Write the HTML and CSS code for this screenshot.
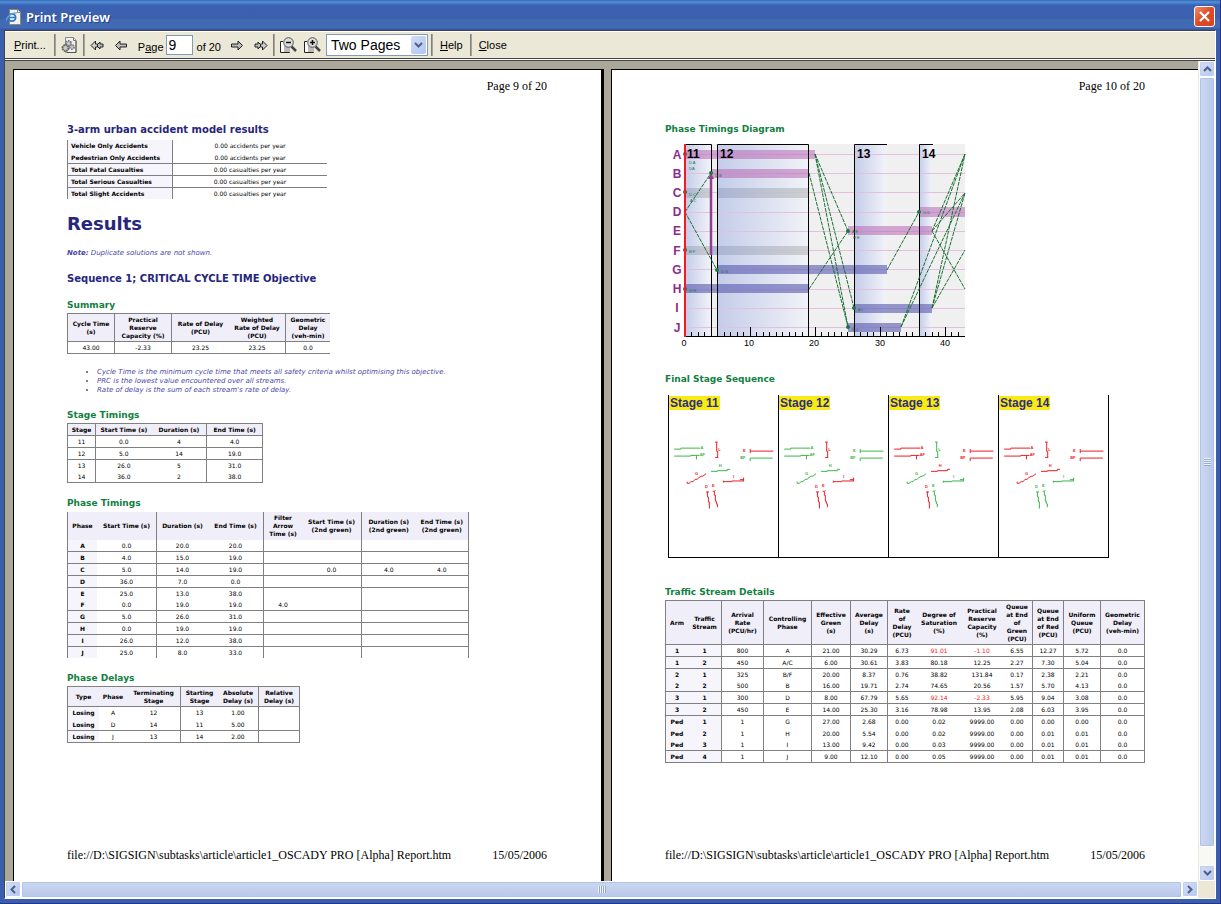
FILE: index.html
```html
<!DOCTYPE html>
<html lang="en">
<head>
<meta charset="utf-8">
<title>Print Preview</title>
<link rel="stylesheet" href="styles.css">
</head>
<body>
<div class="window">
  <header class="titlebar">
    <svg class="app-icon" viewBox="0 0 16 16" width="16" height="16" aria-hidden="true">
      <path d="M3.500.5h8l3 3v12h-11z" fill="#f4f2e6" stroke="#8a8878"/>
      <path d="M11.500.5v3h3" fill="#fff" stroke="#8a8878"/>
      <circle cx="6" cy="8.500" r="3.600" fill="none" stroke="#2f78c8" stroke-width="1.800"/>
      <path d="M3 8.500h6.500" stroke="#2f78c8" stroke-width="1.500"/>
      <path d="M0 12C1 7 6 3.500 11 4" fill="none" stroke="#5fa0dc" stroke-width="1.200"/>
    </svg>
    <h1 class="window-title">Print Preview</h1>
    <button class="close-btn" type="button" aria-label="Close window">
      <svg viewBox="0 0 19 19" width="19" height="19"><path d="M5 5l9 9M14 5l-9 9" stroke="#fff" stroke-width="2.200"/></svg>
    </button>
  </header>

  <div class="client">
    <div class="toolbar" role="toolbar">
      <button class="tool text print" type="button"><u>P</u>rint...</button>
      <span class="sep"></span>
      <button class="tool setup" type="button" aria-label="Page setup">
        <svg viewBox="0 0 16 16" width="16" height="16"><path d="M4.500.5h8l2.500 2.500v12.500H4.500z" fill="#f0f0f0" stroke="#888"/><path d="M12.500.5v3H15" fill="#fff" stroke="#777"/><path d="M6 15.500h9V4" fill="none" stroke="#555"/><circle cx="7.500" cy="6.500" r="2.500" fill="#ccc" stroke="#777" stroke-width="2" stroke-dasharray="1.500 .7"/><circle cx="11" cy="10" r="2" fill="#ccc" stroke="#888" stroke-width="2" stroke-dasharray="1.500 .7"/><circle cx="4.500" cy="11" r="3" fill="#ccc" stroke="#666" stroke-width="2" stroke-dasharray="1.700 .6"/></svg>
      </button>
      <span class="sep"></span>
      <button class="tool nav" type="button" aria-label="First page">
        <svg viewBox="0 0 14 11" width="14" height="11"><path d="M6.500 5.500L10 2v2h3v3h-3v2z" fill="#bbb" stroke="#222"/><path d="M1 5.500L5.500 1v3h2v3h-2v3z" fill="#ccc" stroke="#222"/></svg>
      </button>
      <button class="tool nav" type="button" aria-label="Previous page">
        <svg viewBox="0 0 14 11" width="14" height="11"><path d="M1.500 5.500L6 1v3h6.500v3H6v3z" fill="#bbb" stroke="#222"/></svg>
      </button>
      <label class="page-label" for="page-no">P<u>a</u>ge</label>
      <input class="page-no" id="page-no" type="text" value="9">
      <span class="page-total">of 20</span>
      <button class="tool nav" type="button" aria-label="Next page">
        <svg viewBox="0 0 14 11" width="14" height="11"><path d="M12.500 5.500L8 1v3H1.500v3H8v3z" fill="#bbb" stroke="#222"/></svg>
      </button>
      <button class="tool nav" type="button" aria-label="Last page">
        <svg viewBox="0 0 14 11" width="14" height="11"><path d="M7.500 5.500L4 2v2H1v3h3v2z" fill="#bbb" stroke="#222"/><path d="M13 5.500L8.500 1v3h-2v3h2v3z" fill="#ccc" stroke="#222"/></svg>
      </button>
      <span class="sep"></span>
      <button class="tool zoom" type="button" aria-label="Zoom out">
        <svg viewBox="0 0 17 17" width="17" height="17"><path d="M3 4.500H.5v11h9V12" fill="#fff" stroke="#222"/><path d="M4 6h6v9H4z" fill="#bbb"/><path d="M11.500 9.500l4.500 4.500" stroke="#444" stroke-width="2.500"/><circle cx="8.500" cy="5.500" r="4.800" fill="#ddd" stroke="#555"/><path d="M6 5.500h5" stroke="#111" stroke-width="1.500"/></svg>
      </button>
      <button class="tool zoom" type="button" aria-label="Zoom in">
        <svg viewBox="0 0 17 17" width="17" height="17"><path d="M3 4.500H.5v11h9V12" fill="#fff" stroke="#222"/><path d="M4 6h6v9H4z" fill="#bbb"/><path d="M11.500 9.500l4.500 4.500" stroke="#444" stroke-width="2.500"/><circle cx="8.500" cy="5.500" r="4.800" fill="#ddd" stroke="#555"/><path d="M6 5.500h5M8.500 3v5" stroke="#111" stroke-width="1.500"/></svg>
      </button>
      <span class="combo">
        <select class="combo-select" aria-label="Zoom"><option>Two Pages</option></select>
        <span class="combo-arrow"><svg viewBox="0 0 9 6" width="9" height="6"><path d="M1 1l3.500 3.500L8 1" fill="none" stroke="#4d6185" stroke-width="2"/></svg></span>
      </span>
      <span class="sep"></span>
      <button class="tool text" type="button"><u>H</u>elp</button>
      <span class="sep"></span>
      <button class="tool text" type="button"><u>C</u>lose</button>
    </div>

    <div class="viewer">
      <main class="preview">
        <article class="sheet">
          <div class="sheet-head">Page 9 of 20</div>

          <h3 class="section">3-arm urban accident model results</h3>
          <table class="grid accidents">
            <colgroup><col><col></colgroup>
            <tbody>
              <tr class="open"><th>Vehicle Only Accidents</th><td>0.00 accidents per year</td></tr>
              <tr><th>Pedestrian Only Accidents</th><td>0.00 accidents per year</td></tr>
              <tr><th>Total Fatal Casualties</th><td>0.00 casualties per year</td></tr>
              <tr><th>Total Serious Casualties</th><td>0.00 casualties per year</td></tr>
              <tr class="open short"><th>Total Slight Accidents</th><td>0.00 casualties per year</td></tr>
            </tbody>
          </table>

          <h2 class="results">Results</h2>
          <p class="note"><b>Note:</b> Duplicate solutions are not shown.</p>
          <h3 class="section sequence">Sequence 1; CRITICAL CYCLE TIME Objective</h3>

          <h4 class="caption lead">Summary</h4>
          <table class="grid ruled summary">
            <colgroup><col><col><col><col><col></colgroup>
            <thead><tr><th>Cycle Time<br>(s)</th><th>Practical<br>Reserve<br>Capacity (%)</th><th>Rate of Delay<br>(PCU)</th><th>Weighted<br>Rate of Delay<br>(PCU)</th><th>Geometric<br>Delay<br>(veh-min)</th></tr></thead>
            <tbody><tr><td>43.00</td><td>-2.33</td><td>23.25</td><td>23.25</td><td>0.0</td></tr></tbody>
          </table>
          <ul class="remarks">
            <li>Cycle Time is the minimum cycle time that meets all safety criteria whilst optimising this objective.</li>
            <li>PRC is the lowest value encountered over all streams.</li>
            <li>Rate of delay is the sum of each stream's rate of delay.</li>
          </ul>

          <h4 class="caption">Stage Timings</h4>
          <table class="grid ruled stage-times">
            <colgroup><col><col><col><col></colgroup>
            <thead><tr><th>Stage</th><th>Start Time (s)</th><th>Duration (s)</th><th>End Time (s)</th></tr></thead>
            <tbody>
              <tr><td>11</td><td>0.0</td><td>4</td><td>4.0</td></tr>
              <tr><td>12</td><td>5.0</td><td>14</td><td>19.0</td></tr>
              <tr class="open"><td>13</td><td>26.0</td><td>5</td><td>31.0</td></tr>
              <tr class="short"><td>14</td><td>36.0</td><td>2</td><td>38.0</td></tr>
            </tbody>
          </table>

          <h4 class="caption">Phase Timings</h4>
          <table class="grid phase-times">
            <colgroup><col><col><col><col><col><col><col><col></colgroup>
            <thead><tr class="open"><th>Phase</th><th>Start Time (s)</th><th>Duration (s)</th><th>End Time (s)</th><th>Filter<br>Arrow<br>Time (s)</th><th>Start Time (s)<br>(2nd green)</th><th>Duration (s)<br>(2nd green)</th><th>End Time (s)<br>(2nd green)</th></tr></thead>
            <tbody>
              <tr><th>A</th><td>0.0</td><td>20.0</td><td>20.0</td><td></td><td></td><td></td><td></td></tr>
              <tr><th>B</th><td>4.0</td><td>15.0</td><td>19.0</td><td></td><td></td><td></td><td></td></tr>
              <tr><th>C</th><td>5.0</td><td>14.0</td><td>19.0</td><td></td><td>0.0</td><td>4.0</td><td>4.0</td></tr>
              <tr><th>D</th><td>36.0</td><td>7.0</td><td>0.0</td><td></td><td></td><td></td><td></td></tr>
              <tr class="open"><th>E</th><td>25.0</td><td>13.0</td><td>38.0</td><td></td><td></td><td></td><td></td></tr>
              <tr class="short"><th>F</th><td>0.0</td><td>19.0</td><td>19.0</td><td>4.0</td><td></td><td></td><td></td></tr>
              <tr><th>G</th><td>5.0</td><td>26.0</td><td>31.0</td><td></td><td></td><td></td><td></td></tr>
              <tr><th>H</th><td>0.0</td><td>19.0</td><td>19.0</td><td></td><td></td><td></td><td></td></tr>
              <tr><th>I</th><td>26.0</td><td>12.0</td><td>38.0</td><td></td><td></td><td></td><td></td></tr>
              <tr class="open short"><th>J</th><td>25.0</td><td>8.0</td><td>33.0</td><td></td><td></td><td></td><td></td></tr>
            </tbody>
          </table>

          <h4 class="caption">Phase Delays</h4>
          <table class="grid ruled delays">
            <colgroup><col><col><col><col><col><col></colgroup>
            <thead><tr><th>Type</th><th>Phase</th><th>Terminating<br>Stage</th><th>Starting<br>Stage</th><th>Absolute<br>Delay (s)</th><th>Relative<br>Delay (s)</th></tr></thead>
            <tbody>
              <tr class="open"><th>Losing</th><td>A</td><td>12</td><td>13</td><td>1.00</td><td></td></tr>
              <tr><th>Losing</th><td>D</td><td>14</td><td>11</td><td>5.00</td><td></td></tr>
              <tr><th>Losing</th><td>J</td><td>13</td><td>14</td><td>2.00</td><td></td></tr>
            </tbody>
          </table>

          <footer class="sheet-foot"><span>file://D:\SIGSIGN\subtasks\article\article1_OSCADY PRO [Alpha] Report.htm</span><span>15/05/2006</span></footer>
        </article>

        <article class="sheet">
          <div class="sheet-head">Page 10 of 20</div>

          <h4 class="caption first">Phase Timings Diagram</h4>
          <svg class="diagram" viewBox="0 -3 305 213" width="305" height="213" role="img" aria-label="Phase timings diagram">
            <defs>
              <linearGradient id="fade"><stop offset="0" stop-color="#c3cce9"/><stop offset="1" stop-color="#f2f3f8"/></linearGradient>
              <linearGradient id="grey"><stop offset="0" stop-color="#a4b0d0"/><stop offset="1" stop-color="#c8cac8"/></linearGradient>
            </defs>
            <path fill="#f0f0f0" d="M20 4h280v192H20z"/>
            <g fill="url(#fade)"><rect x="20" y="4" width="26" height="192"/><rect x="52" y="4" width="92" height="192"/><rect x="189" y="4" width="32" height="192"/><rect x="254" y="4" width="13" height="192"/></g>
            <path d="M20 14.500h280M20 33.500h280M20 52.500h280M20 72.500h280M20 91.500h280M20 110.500h280M20 129.500h280M20 149.500h280M20 168.500h280M20 187.500h280" stroke="#e3bfe0"/>
            <g fill="#b868b4" fill-opacity=".55"><path d="M20 10h130v9H20z"/><path d="M46 29h98v9H46z"/><path d="M254 67h46v10h-46z"/><path d="M183 86h84v9h-84z"/></g>
            <g fill="url(#grey)" fill-opacity=".85"><rect x="20" y="48" width="26" height="10"/><rect x="52" y="48" width="92" height="10"/><rect x="20" y="106" width="26" height="9"/><rect x="46" y="106" width="98" height="9"/></g>
            <g fill="#5a5cb0" fill-opacity=".62"><path d="M52 125h170v9H52z"/><path d="M20 144h124v9H20z"/><path d="M189 164h78v9h-78z"/><path d="M183 183h53v9h-53z"/></g>
            <path d="M46.500 196V4.500H20M52.500 196V4.500h91V196M189.500 196V4.500H222M254.500 196V4.500H268" fill="none" stroke="#000"/>
            <path d="M46 115V38" stroke="#933e93" stroke-width="2.500"/><path d="M43 39l3-6 3 6z" fill="#933e93"/>
            <path d="M20 72l26-39M20 72l32 58M150 14l33 77M150 14l39 154M150 14l33 173M144 33l39 154M144 149l39-58M222 130l32-58M236 187L300 14M236 187L300 53M267 91L300 14M267 91L300 53M267 168L300 14M267 168L300 53M267 91l33 58M267 168l33-58" fill="none" stroke="#1b7032" stroke-dasharray="4 1"/>
            <g fill="#177a3b"><circle cx="46" cy="33" r="2"/><circle cx="52" cy="130" r="2"/><circle cx="183" cy="91" r="2"/><circle cx="189" cy="168" r="2"/><circle cx="183" cy="187" r="2"/><circle cx="254" cy="72" r="2"/><circle cx="20" cy="14" r="2"/><circle cx="20" cy="52" r="2"/><circle cx="20" cy="110" r="2"/><circle cx="20" cy="149" r="2"/></g>
            <g class="tiny-tag"><text x="24" y="24">D A</text><text x="24" y="30">DA</text><text x="50" y="37">D B</text><text x="24" y="56">D C</text><text x="25" y="62">A C</text><text x="24" y="113">B F</text><text x="56" y="133">D G</text><text x="24" y="152">G H</text><text x="187" y="93">A E</text><text x="188" y="99">H E</text><text x="193" y="171">A I</text><text x="187" y="191">B J</text><text x="258" y="74">G D</text></g>
            <path d="M20 196.500h280" stroke="#000"/>
            <path d="M26.500 192v4M33.500 192v4M39.500 192v4M46.500 192v4M59.500 192v4M65.500 192v4M72.500 192v4M78.500 192v4M85.500 187v9M91.500 192v4M98.500 192v4M104.500 192v4M111.500 192v4M117.500 192v4M124.500 192v4M130.500 192v4M137.500 192v4M150.500 187v9M156.500 192v4M163.500 192v4M169.500 192v4M176.500 192v4M182.500 192v4M195.500 192v4M202.500 192v4M208.500 192v4M215.500 187v9M221.500 192v4M228.500 192v4M234.500 192v4M241.500 192v4M247.500 192v4M260.500 192v4M267.500 192v4M273.500 192v4M280.500 187v9M286.500 192v4M293.500 192v4" stroke="#000"/>
            <path d="M20 4v193" stroke="#ee1c24" stroke-width="2"/>
            <g class="phase-name"><text x="12" y="19">A</text><text x="12" y="38">B</text><text x="12" y="57">C</text><text x="12" y="76">D</text><text x="12" y="95">E</text><text x="12" y="115">F</text><text x="12" y="134">G</text><text x="12" y="153">H</text><text x="12" y="172">I</text><text x="12" y="192">J</text></g>
            <g class="stage-no"><text x="22" y="18">11</text><text x="55" y="18">12</text><text x="192" y="18">13</text><text x="257" y="18">14</text></g>
            <g class="tick-no"><text x="19" y="206">0</text><text x="84" y="206">10</text><text x="149" y="206">20</text><text x="215" y="206">30</text><text x="280" y="206">40</text></g>
          </svg>

          <h4 class="caption seq">Final Stage Sequence</h4>
          <svg class="defs" width="0" height="0" aria-hidden="true">
            <defs>
              <g id="mv-a"><path d="M18 163h20v-3h58"/><text x="97" y="162">A</text></g>
              <g id="mv-af"><path d="M18 184h50v-2h26M85 182v12"/><text x="95" y="184">AF</text></g>
              <g id="mv-l"><path d="M141 142h8M146 142v28h3v17M141 188h10"/><text x="151" y="169">L</text></g>
              <g id="mv-e"><path d="M247 163v12M247 169h70"/><text x="225" y="171">E</text></g>
              <g id="mv-bf"><path d="M247 199v-9h68"/><text x="217" y="192">BF</text></g>
              <g id="mv-g"><path d="M57 261v5h6l6-5h6l6-7h6l5-5 7-4 6-1 9-7"/><text x="81" y="242">G</text></g>
              <g id="mv-h"><path d="M129 230h19v-2h30v-4h8"/><text x="152" y="218">H</text></g>
              <g id="mv-i"><path d="M166 258v6M166 261h25v-2h36M216 255h12M227 249v11"/><text x="195" y="249">I</text></g>
              <g id="mv-d"><path d="M114 292h9M118 292v15h3v15h3v20"/><text x="111" y="281">D</text></g>
              <g id="mv-b"><path d="M134 290h5l3-3M139 290v12h3v18h3v8h3v10"/><text x="132" y="277">E</text></g>
            </defs>
          </svg>
          <div class="stages">
            <figure class="stage"><figcaption>Stage 11</figcaption>
              <svg viewBox="0 0 330 488" width="110" height="162"><g class="go"><use href="#mv-a"/><use href="#mv-af"/><use href="#mv-bf"/><use href="#mv-h"/></g><g class="halt"><use href="#mv-l"/><use href="#mv-e"/><use href="#mv-g"/><use href="#mv-i"/><use href="#mv-d"/><use href="#mv-b"/></g></svg></figure>
            <figure class="stage"><figcaption>Stage 12</figcaption>
              <svg viewBox="0 0 330 488" width="110" height="162"><g class="go"><use href="#mv-a"/><use href="#mv-af"/><use href="#mv-e"/><use href="#mv-bf"/><use href="#mv-h"/><use href="#mv-g"/></g><g class="halt"><use href="#mv-l"/><use href="#mv-i"/><use href="#mv-d"/><use href="#mv-b"/></g></svg></figure>
            <figure class="stage"><figcaption>Stage 13</figcaption>
              <svg viewBox="0 0 330 488" width="110" height="162"><g class="go"><use href="#mv-l"/><use href="#mv-g"/><use href="#mv-i"/><use href="#mv-b"/></g><g class="halt"><use href="#mv-a"/><use href="#mv-af"/><use href="#mv-e"/><use href="#mv-bf"/><use href="#mv-h"/><use href="#mv-d"/></g></svg></figure>
            <figure class="stage"><figcaption>Stage 14</figcaption>
              <svg viewBox="0 0 330 488" width="110" height="162"><g class="go"><use href="#mv-i"/><use href="#mv-d"/><use href="#mv-b"/></g><g class="halt"><use href="#mv-a"/><use href="#mv-af"/><use href="#mv-l"/><use href="#mv-e"/><use href="#mv-bf"/><use href="#mv-h"/><use href="#mv-g"/></g></svg></figure>
          </div>

          <h4 class="caption streams-title">Traffic Stream Details</h4>
          <table class="grid ruled streams">
            <colgroup><col><col><col><col><col><col><col><col><col><col><col><col><col></colgroup>
            <thead><tr><th>Arm</th><th>Traffic<br>Stream</th><th>Arrival<br>Rate<br>(PCU/hr)</th><th>Controlling<br>Phase</th><th>Effective<br>Green<br>(s)</th><th>Average<br>Delay<br>(s)</th><th>Rate<br>of<br>Delay<br>(PCU)</th><th>Degree of<br>Saturation<br>(%)</th><th>Practical<br>Reserve<br>Capacity<br>(%)</th><th>Queue<br>at End<br>of<br>Green<br>(PCU)</th><th>Queue<br>at End<br>of Red<br>(PCU)</th><th>Uniform<br>Queue<br>(PCU)</th><th>Geometric<br>Delay<br>(veh-min)</th></tr></thead>
            <tbody>
              <tr><th>1</th><th>1</th><td>800</td><td>A</td><td>21.00</td><td>30.29</td><td>6.73</td><td class="over">91.01</td><td class="over">-1.10</td><td>6.55</td><td>12.27</td><td>5.72</td><td>0.0</td></tr>
              <tr><th>1</th><th>2</th><td>450</td><td>A/C</td><td>6.00</td><td>30.61</td><td>3.83</td><td>80.18</td><td>12.25</td><td>2.27</td><td>7.30</td><td>5.04</td><td>0.0</td></tr>
              <tr class="open"><th>2</th><th>1</th><td>325</td><td>B/F</td><td>20.00</td><td>8.37</td><td>0.76</td><td>38.82</td><td>131.84</td><td>0.17</td><td>2.38</td><td>2.21</td><td>0.0</td></tr>
              <tr class="short"><th>2</th><th>2</th><td>500</td><td>B</td><td>16.00</td><td>19.71</td><td>2.74</td><td>74.65</td><td>20.56</td><td>1.57</td><td>5.70</td><td>4.13</td><td>0.0</td></tr>
              <tr><th>3</th><th>1</th><td>300</td><td>D</td><td>8.00</td><td>67.79</td><td>5.65</td><td class="over">92.14</td><td class="over">-2.33</td><td>5.95</td><td>9.04</td><td>3.08</td><td>0.0</td></tr>
              <tr><th>3</th><th>2</th><td>450</td><td>E</td><td>14.00</td><td>25.30</td><td>3.16</td><td>78.98</td><td>13.95</td><td>2.08</td><td>6.03</td><td>3.95</td><td>0.0</td></tr>
              <tr class="open"><th>Ped</th><th>1</th><td>1</td><td>G</td><td>27.00</td><td>2.68</td><td>0.00</td><td>0.02</td><td>9999.00</td><td>0.00</td><td>0.00</td><td>0.00</td><td>0.0</td></tr>
              <tr class="open"><th>Ped</th><th>2</th><td>1</td><td>H</td><td>20.00</td><td>5.54</td><td>0.00</td><td>0.02</td><td>9999.00</td><td>0.00</td><td>0.01</td><td>0.01</td><td>0.0</td></tr>
              <tr class="short"><th>Ped</th><th>3</th><td>1</td><td>I</td><td>13.00</td><td>9.42</td><td>0.00</td><td>0.03</td><td>9999.00</td><td>0.00</td><td>0.01</td><td>0.01</td><td>0.0</td></tr>
              <tr><th>Ped</th><th>4</th><td>1</td><td>J</td><td>9.00</td><td>12.10</td><td>0.00</td><td>0.05</td><td>9999.00</td><td>0.00</td><td>0.01</td><td>0.01</td><td>0.0</td></tr>
            </tbody>
          </table>

          <footer class="sheet-foot"><span>file://D:\SIGSIGN\subtasks\article\article1_OSCADY PRO [Alpha] Report.htm</span><span>15/05/2006</span></footer>
        </article>
      </main>

      <div class="scroll vertical">
        <button class="scroll-btn" type="button" aria-label="Scroll up"><svg viewBox="0 0 9 6" width="9" height="6"><path d="M1 5l3.500-3.500L8 5"/></svg></button>
        <div class="thumb"><span class="grip"></span></div>
        <div class="rest"></div>
        <button class="scroll-btn" type="button" aria-label="Scroll down"><svg viewBox="0 0 9 6" width="9" height="6"><path d="M1 1l3.500 3.500L8 1"/></svg></button>
      </div>
      <div class="scroll horizontal">
        <button class="scroll-btn" type="button" aria-label="Scroll left"><svg viewBox="0 0 6 9" width="6" height="9"><path d="M5 1L1.500 4.500 5 8"/></svg></button>
        <div class="thumb"><span class="grip"></span></div>
        <button class="scroll-btn" type="button" aria-label="Scroll right"><svg viewBox="0 0 6 9" width="6" height="9"><path d="M1 1l3.500 3.500L1 8"/></svg></button>
      </div>
      <div class="corner"></div>
    </div>
  </div>
</div>
</body>
</html>
```
FILE: styles.css
```css
* { box-sizing: border-box; }

body {
  margin: 0;
  background: #3c60ac;
  color: #000;
  font-family: "Liberation Sans", Arial, sans-serif;
}

h1, h2, h3, h4, p, ul, figure { margin: 0; padding: 0; }
button { margin: 0; padding: 0; border: 0; background: none; font: inherit; color: inherit; }
svg { display: block; }

/* Window frame */
.window {
  display: flex;
  flex-direction: column;
  min-height: 100vh;
  padding: 0 4px 4px;
  background: #3a5eae;
  border-right: 1px solid #26318a;
  border-bottom: 1px solid #26318a;
}
.titlebar {
  display: flex;
  align-items: center;
  gap: 4px;
  height: 30px;
  margin: 0 -4px;
  padding: 3px 5px 0 6px;
  background: linear-gradient(#3a62b4 0, #4f93d8 2px, #3a62b4 5px, #3c60ac 18px, #4169b4 20px, #4169b4 28px, #34509c 30px);
}
.window-title {
  flex: 1;
  color: #fff;
  font: 600 13px/18px "Noto Sans", "Open Sans", sans-serif;
  text-shadow: 1px 1px 0 #26418a;
}
.close-btn {
  width: 21px;
  height: 21px;
  border: 1px solid #fff;
  border-radius: 3px;
  background: linear-gradient(135deg, #ee8d70, #df4a24 50%, #d9431f);
}
.client {
  display: flex;
  flex: 1;
  flex-direction: column;
  border: 1px solid #444;
  border-right-color: #fff;
  border-bottom-color: #fff;
  background: #fff;
}

/* Toolbar */
.toolbar {
  display: flex;
  align-items: center;
  height: 28px;
  border-top: 1px solid #fff;
  border-bottom: 1px solid #444;
  background: #ebe8d7;
  font-size: 11px;
  line-height: 16px;
}
.text { padding: 0 7px; }
.print { padding: 0 8px 0 9px; }
.sep {
  width: 2px;
  height: 22px;
  border-left: 1px solid #808080;
  border-right: 1px solid #a8a698;
}
.setup { padding: 0 6px 0 5px; }
.nav { padding: 0 5px; }
.zoom { padding: 0 2px 0 5px; }
.page-label { padding: 3px 2px 0 5px; }
.page-no {
  width: 27px;
  height: 20px;
  padding: 0 2px;
  border: 1px solid #7f9db9;
  background: #fff;
  font: 14px/18px "Liberation Sans", Arial, sans-serif;
}
.page-total { padding: 3px 4px 0; }
.combo { position: relative; margin: 0 3px; }
.combo-select {
  display: block;
  width: 102px;
  height: 22px;
  padding: 0 20px 0 4px;
  border: 1px solid #7f9db9;
  border-radius: 0;
  background: #fff;
  color: #000;
  font: 14px/20px "Liberation Sans", Arial, sans-serif;
  appearance: none;
}
.combo-arrow {
  position: absolute;
  top: 2px;
  right: 2px;
  display: grid;
  place-items: center;
  width: 15px;
  height: 18px;
  border-radius: 2px;
  background: linear-gradient(135deg, #d0dcf8, #b3c6ee);
  pointer-events: none;
}

/* Preview surface */
.viewer {
  display: grid;
  flex: 1;
  grid-template-columns: minmax(0, 1fr) 17px;
  grid-template-rows: minmax(0, 1fr) 17px;
  margin-top: 1px;
  border-top: 1px solid #444;
}
.preview {
  display: grid;
  grid-template-columns: 1fr 1fr;
  column-gap: 7px;
  padding: 8px 0 0 8px;
  overflow: hidden;
  background: #aca899;
}
.sheet {
  display: flex;
  flex-direction: column;
  align-items: flex-start;
  margin-right: -2px;
  padding: 9px 54px 19px 53px;
  border: solid #000;
  border-width: 1px 3px 0 1px;
  background: #fff;
  font-family: "DejaVu Sans", Verdana, sans-serif;
}
.sheet + .sheet { margin: 0 -4px 0 2px; }
.sheet-head, .sheet-foot {
  align-self: stretch;
  font: 12px/14px "Liberation Serif", "Times New Roman", serif;
}
.sheet-head { text-align: right; }
.sheet-foot { display: flex; justify-content: space-between; margin-top: auto; }

.section { margin: 29px 0 2px; color: #26267c; font-size: 10px; line-height: 16px; }
.results { margin-top: 13px; color: #26267c; font-size: 18px; line-height: 24px; }
.note { margin-top: 13px; color: #4848a8; font-size: 7px; line-height: 9px; font-style: italic; }
.sequence { margin: 13px 0 0; }
.caption { margin: 14px 0 2px; color: #118040; font-size: 9px; line-height: 12px; }
.lead { margin-top: 12px; }
.first { margin-top: 30px; }
.seq { margin: 23px 0 10px; }
.streams-title { margin-top: 28px; }
.remarks {
  margin-top: 14px;
  padding-left: 30px;
  color: #4848a8;
  font-size: 7px;
  font-style: italic;
  line-height: 9px;
}

/* Report tables */
.grid {
  table-layout: fixed;
  border-collapse: separate;
  border-spacing: 0;
  border-left: 1px solid #808080;
  font-size: 6px;
  line-height: 8px;
  text-align: center;
}
.grid th, .grid td {
  height: 12px;
  padding: 0;
  border: 0 solid #808080;
  border-bottom-width: 1px;
  white-space: nowrap;
}
.grid th { background: #f6f5fb; }
.grid thead th { background: #f0eef8; }
.grid .open > * { border-bottom: 0; }
.grid .short > * { height: 11px; }
.ruled { border-top: 1px solid #808080; }
.grid .over { color: #f02020; }

.accidents { width: 260px; }
.accidents col:first-child { width: 105px; }
.accidents th { padding-left: 3px; border-right-width: 1px; text-align: left; }

.summary { width: 263px; }
.summary thead th { height: 28px; }
.summary col:nth-child(1) { width: 47px; }
.summary col:nth-child(2), .summary col:nth-child(3), .summary col:nth-child(4) { width: 57px; }
.summary tr > :nth-child(1), .summary tr > :nth-child(2), .summary tr > :nth-child(4) { border-right-width: 1px; }

.stage-times { width: 196px; }
.stage-times col:nth-child(1) { width: 28px; }
.stage-times tr > :nth-child(1), .stage-times tr > :nth-child(3), .stage-times tr > :nth-child(4) { border-right-width: 1px; }

.phase-times { width: 402px; margin-top: 1px; }
.phase-times thead th { height: 28px; }
.phase-times col:nth-child(1) { width: 29px; }
.phase-times col:nth-child(2) { width: 60px; }
.phase-times col:nth-child(3) { width: 51px; }
.phase-times col:nth-child(4) { width: 56px; }
.phase-times col:nth-child(5) { width: 38px; }
.phase-times col:nth-child(6) { width: 60px; }
.phase-times tr > :nth-child(2), .phase-times tr > :nth-child(4), .phase-times tr > :nth-child(6), .phase-times tr > :nth-child(8) { border-right-width: 1px; }

.delays { width: 233px; }
.delays thead th { height: 20px; }
.delays col:nth-child(1) { width: 31px; }
.delays col:nth-child(2) { width: 28px; }
.delays col:nth-child(3) { width: 54px; }
.delays col:nth-child(4) { width: 37px; }
.delays tr > :nth-child(3), .delays tr > :nth-child(5), .delays tr > :nth-child(6) { border-right-width: 1px; }

.streams { width: 100%; }
.streams thead th { height: 44px; }
.streams col:nth-child(1) { width: 22px; }
.streams col:nth-child(2) { width: 34px; }
.streams col:nth-child(3) { width: 42px; }
.streams col:nth-child(4) { width: 48px; }
.streams col:nth-child(5) { width: 39px; }
.streams col:nth-child(6) { width: 37px; }
.streams col:nth-child(7) { width: 28px; }
.streams col:nth-child(8) { width: 46px; }
.streams col:nth-child(9) { width: 40px; }
.streams col:nth-child(10) { width: 31px; }
.streams col:nth-child(11) { width: 31px; }
.streams col:nth-child(12) { width: 37px; }
.streams tr > * { border-right-width: 1px; }
.streams tr > :nth-child(1), .streams tr > :nth-child(7), .streams tr > :nth-child(8), .streams tr > :nth-child(9) { border-right-width: 0; }

/* Diagrams */
.diagram text { font-family: "Liberation Sans", Arial, sans-serif; }
.phase-name { fill: #8c2c8c; font-size: 12px; font-weight: bold; text-anchor: middle; }
.stage-no { font-size: 12px; font-weight: bold; }
.tick-no { font-size: 9px; text-anchor: middle; }
.tiny-tag { fill: #177a3b; font-size: 4px; }
.defs { position: absolute; }

.stages {
  display: flex;
  margin-left: 3px;
  border-right: 1px solid #000;
  border-bottom: 1px solid #000;
}
.stage { position: relative; width: 110px; border-left: 1px solid #000; }
.stage figcaption {
  position: absolute;
  top: 1px;
  left: 0;
  padding: 0 1px;
  background: #f8ea14;
  color: #2c2c84;
  font: bold 12px/14px "Liberation Sans", Arial, sans-serif;
}
.stage svg { margin-left: -1px; }
.defs path { fill: none; stroke: currentColor; stroke-width: 3; }
.defs text { fill: currentColor; font: bold 12px "Liberation Sans", Arial, sans-serif; }
.go { color: #3cb44a; }
.halt { color: #ec1c24; }

/* Scroll bars */
.scroll { display: flex; background: #f8f8f5; }
.vertical { flex-direction: column; border-left: 1px solid #eceae0; }
.scroll-btn {
  display: grid;
  flex: none;
  place-items: center;
  width: 16px;
  height: 16px;
  border: 1px solid #fff;
  border-radius: 2px;
  background: linear-gradient(135deg, #d4defa, #b6c8f0);
  box-shadow: inset 0 0 0 1px #c0cfee;
}
.scroll-btn path { fill: none; stroke: #4d6185; stroke-width: 2; }
.thumb {
  display: grid;
  place-items: center;
  border: 1px solid #fff;
  border-radius: 2px;
  box-shadow: inset 0 0 0 1px #b0c4e8;
}
.vertical .thumb { flex: 768; background: linear-gradient(90deg, #ccd7f1, #b9c9ea); }
.vertical .rest { flex: 18; }
.horizontal .thumb { flex: 1; background: linear-gradient(#ccd7f1, #b9c9ea); }
.vertical .grip { width: 7px; height: 8px; background: repeating-linear-gradient(#eef3ff 0 1px, #93a9d6 1px 2px); }
.horizontal .grip { width: 8px; height: 7px; background: repeating-linear-gradient(90deg, #eef3ff 0 1px, #93a9d6 1px 2px); }
.corner { background: #ebe8d7; }
```
